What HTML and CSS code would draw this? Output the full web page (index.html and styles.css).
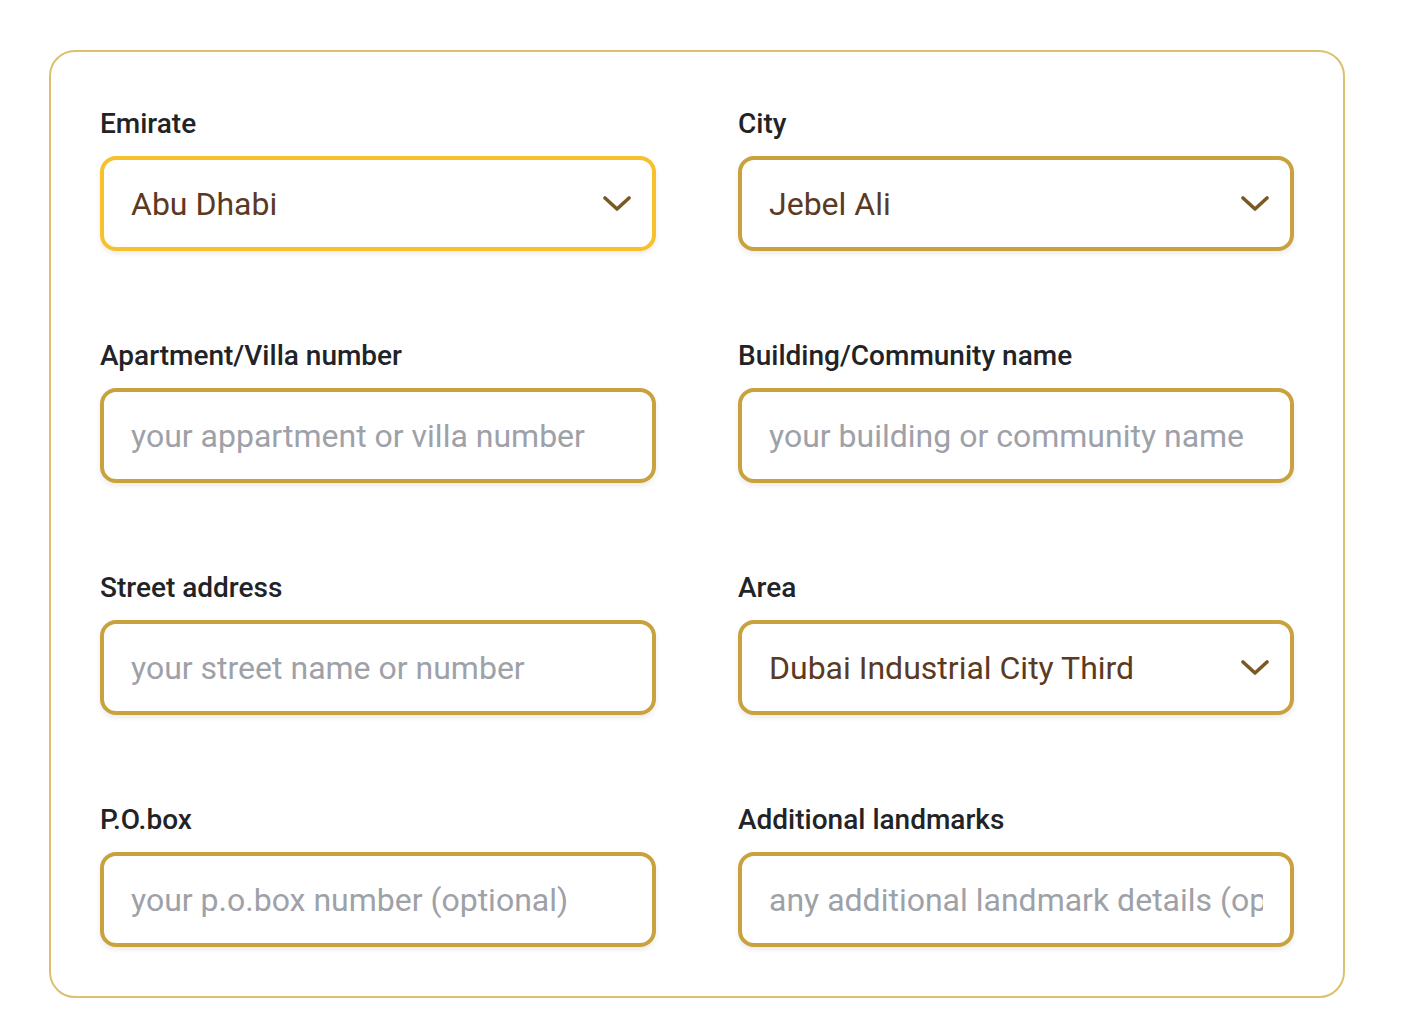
FILE: index.html
```html
<!DOCTYPE html>
<html>
<head>
<meta charset="utf-8">
<link rel="stylesheet" href="styles.css">
</head>
<body>
<div class="card">
  <div class="grid">
    <div class="field">
      <label class="label">Emirate</label>
      <div class="control focused">
        <span class="value">Abu Dhabi</span>
        <svg class="chev" viewBox="0 0 28 16" width="28" height="16"><path d="M2 2 L14 13 L26 2" fill="none" stroke="#7a5a24" stroke-width="3.6" stroke-linecap="round" stroke-linejoin="round"/></svg>
      </div>
    </div>
    <div class="field">
      <label class="label">City</label>
      <div class="control">
        <span class="value">Jebel Ali</span>
        <svg class="chev" viewBox="0 0 28 16" width="28" height="16"><path d="M2 2 L14 13 L26 2" fill="none" stroke="#7a5a24" stroke-width="3.6" stroke-linecap="round" stroke-linejoin="round"/></svg>
      </div>
    </div>
    <div class="field">
      <label class="label">Apartment/Villa number</label>
      <div class="control"><span class="placeholder">your appartment or villa number</span></div>
    </div>
    <div class="field">
      <label class="label">Building/Community name</label>
      <div class="control"><span class="placeholder">your building or community name</span></div>
    </div>
    <div class="field">
      <label class="label">Street address</label>
      <div class="control"><span class="placeholder">your street name or number</span></div>
    </div>
    <div class="field">
      <label class="label">Area</label>
      <div class="control">
        <span class="value">Dubai Industrial City Third</span>
        <svg class="chev" viewBox="0 0 28 16" width="28" height="16"><path d="M2 2 L14 13 L26 2" fill="none" stroke="#7a5a24" stroke-width="3.6" stroke-linecap="round" stroke-linejoin="round"/></svg>
      </div>
    </div>
    <div class="field">
      <label class="label">P.O.box</label>
      <div class="control"><span class="placeholder">your p.o.box number (optional)</span></div>
    </div>
    <div class="field">
      <label class="label">Additional landmarks</label>
      <div class="control"><span class="placeholder clip">any additional landmark details (optional)</span></div>
    </div>
  </div>
</div>
</body>
</html>
```

FILE: styles.css
```css
html, body {
  margin: 0;
  padding: 0;
  background: #ffffff;
}
body {
  padding: 50px 0 0 49px;
  font-family: Roboto, "Liberation Sans", sans-serif;
}
.card {
  box-sizing: border-box;
  width: 1296px;
  height: 948px;
  border: 2px solid #dbc06e;
  border-radius: 26px;
  padding: 56px 48px 48px 49px;
}
.grid {
  display: grid;
  grid-template-columns: 556px 556px;
  column-gap: 82px;
  row-gap: 89px;
}
.field {
  display: flex;
  flex-direction: column;
  gap: 16px;
}
.label {
  font-size: 28px;
  line-height: 32px;
  font-weight: 500;
  color: #222326;
}
.control {
  box-sizing: border-box;
  height: 95px;
  border: 4px solid #c9a23f;
  border-radius: 16px;
  box-shadow: 0 3px 5px rgba(0, 0, 0, 0.08);
  display: flex;
  align-items: center;
  padding: 0 21px 0 27px;
  overflow: hidden;
}
.control.focused {
  border-color: #f7c12b;
}
.value {
  flex: 1;
  font-size: 32px;
  color: #5b3a24;
  white-space: nowrap;
}
.placeholder {
  font-size: 32px;
  color: #9ea1a8;
  white-space: nowrap;
}
.placeholder.clip {
  display: block;
  width: 494px;
  overflow: hidden;
}
.chev {
  flex: none;
  display: block;
}
```
